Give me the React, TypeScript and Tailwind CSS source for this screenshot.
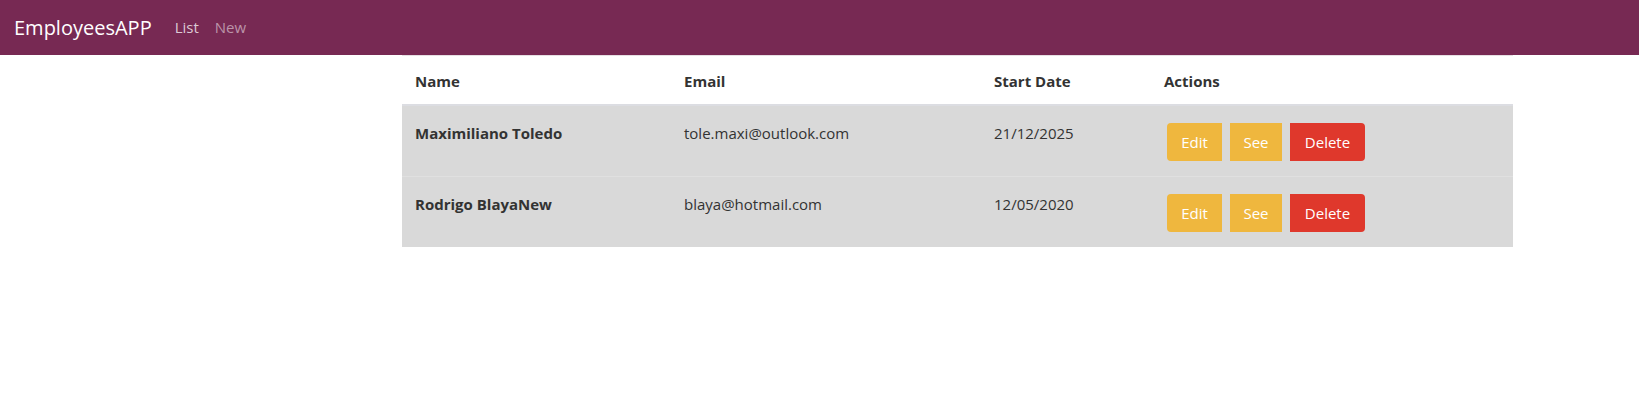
import React from 'react';

type Employee = {
  name: string;
  email: string;
  startDate: string;
};

const employees: Employee[] = [
  { name: 'Maximiliano Toledo', email: 'tole.maxi@outlook.com', startDate: '21/12/2025' },
  { name: 'Rodrigo BlayaNew', email: 'blaya@hotmail.com', startDate: '12/05/2020' },
];

const Navbar: React.FC = () => (
  <nav className="h-[55px] bg-[#772953] flex items-center px-[14px]">
    <a href="#" className="text-white text-[20px] leading-none mr-[23px]">
      EmployeesAPP
    </a>
    <a href="#" className="text-[15px] text-[#ddc9d4] mr-[16px]">List</a>
    <a href="#" className="text-[15px] text-[#bb94a9]">New</a>
  </nav>
);

const App: React.FC = () => {
  return (
    <div className="min-h-[420px] bg-white text-[#333] font-['Open_Sans',sans-serif]">
      <Navbar />
      <table className="ml-[402px] w-[1111px] table-fixed border-collapse border-t border-[#e6dfe3] text-[15px] leading-[22px]">
        <colgroup>
          <col className="w-[269px]" />
          <col className="w-[310px]" />
          <col className="w-[170px]" />
          <col className="w-[362px]" />
        </colgroup>
        <thead>
          <tr className="border-b-2 border-[#dcdde2]">
            <th className="text-left font-bold pl-[13px] pt-[14px] pb-[12px]">Name</th>
            <th className="text-left font-bold pl-[13px] pt-[14px] pb-[12px]">Email</th>
            <th className="text-left font-bold pl-[13px] pt-[14px] pb-[12px]">Start Date</th>
            <th className="text-left font-bold pl-[13px] pt-[14px] pb-[12px]">Actions</th>
          </tr>
        </thead>
        <tbody className="bg-[#d9d9d9]">
          {employees.map((emp, index) => (
            <tr key={index} className="border-t border-[#e0e0e0] first:border-t-0">
              <td className="align-top pl-[13px] pt-[16px] pb-[15px] font-bold">{emp.name}</td>
              <td className="align-top pl-[13px] pt-[16px] pb-[15px]">{emp.email}</td>
              <td className="align-top pl-[13px] pt-[16px] pb-[15px]">{emp.startDate}</td>
              <td className="align-top pl-[13px] pt-[16px] pb-[15px]">
                <div className="flex gap-[8px] mt-[1px] ml-[3px]">
                  <button className="h-[38px] w-[55px] bg-[#efb73e] text-white rounded-l-[4px]">Edit</button>
                  <button className="h-[38px] w-[52px] bg-[#efb73e] text-white">See</button>
                  <button className="h-[38px] w-[75px] bg-[#df382c] text-white rounded-r-[4px]">Delete</button>
                </div>
              </td>
            </tr>
          ))}
        </tbody>
      </table>
    </div>
  );
};

export default App;
